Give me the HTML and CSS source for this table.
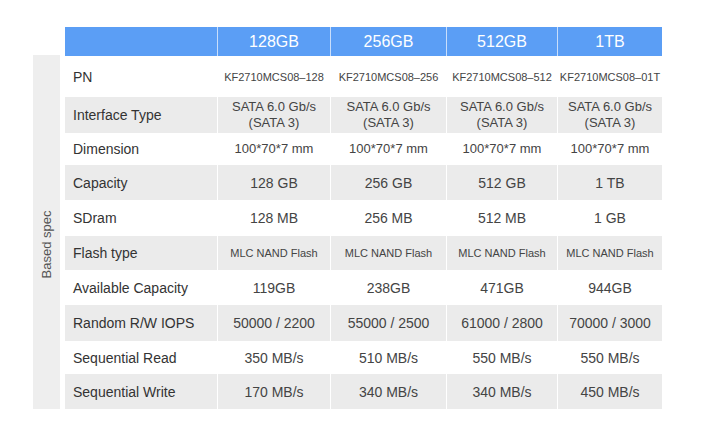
FILE: index.html
```html
<!DOCTYPE html>
<html>
<head>
<meta charset="utf-8">
<link rel="stylesheet" href="styles.css">
</head>
<body>
<div class="page">
  <div class="side"><span class="side-text">Based spec</span></div>
  <div class="spec">
    <div class="row head">
      <div class="cell"></div>
      <div class="cell">128GB</div>
      <div class="cell">256GB</div>
      <div class="cell">512GB</div>
      <div class="cell">1TB</div>
    </div>
    <div class="row r-pn">
      <div class="cell label">PN</div>
      <div class="cell small">KF2710MCS08–128</div>
      <div class="cell small">KF2710MCS08–256</div>
      <div class="cell small">KF2710MCS08–512</div>
      <div class="cell small">KF2710MCS08–01T</div>
    </div>
    <div class="row grey r-if">
      <div class="cell label">Interface Type</div>
      <div class="cell mid">SATA 6.0 Gb/s<br>(SATA 3)</div>
      <div class="cell mid">SATA 6.0 Gb/s<br>(SATA 3)</div>
      <div class="cell mid">SATA 6.0 Gb/s<br>(SATA 3)</div>
      <div class="cell mid">SATA 6.0 Gb/s<br>(SATA 3)</div>
    </div>
    <div class="row r-dim">
      <div class="cell label">Dimension</div>
      <div class="cell mid">100*70*7 mm</div>
      <div class="cell mid">100*70*7 mm</div>
      <div class="cell mid">100*70*7 mm</div>
      <div class="cell mid">100*70*7 mm</div>
    </div>
    <div class="row grey r-cap">
      <div class="cell label">Capacity</div>
      <div class="cell">128 GB</div>
      <div class="cell">256 GB</div>
      <div class="cell">512 GB</div>
      <div class="cell">1 TB</div>
    </div>
    <div class="row r-sd">
      <div class="cell label">SDram</div>
      <div class="cell">128 MB</div>
      <div class="cell">256 MB</div>
      <div class="cell">512 MB</div>
      <div class="cell">1 GB</div>
    </div>
    <div class="row grey r-fl">
      <div class="cell label">Flash type</div>
      <div class="cell small">MLC NAND Flash</div>
      <div class="cell small">MLC NAND Flash</div>
      <div class="cell small">MLC NAND Flash</div>
      <div class="cell small">MLC NAND Flash</div>
    </div>
    <div class="row r-av">
      <div class="cell label">Available Capacity</div>
      <div class="cell">119GB</div>
      <div class="cell">238GB</div>
      <div class="cell">471GB</div>
      <div class="cell">944GB</div>
    </div>
    <div class="row grey r-rw">
      <div class="cell label">Random R/W IOPS</div>
      <div class="cell">50000 / 2200</div>
      <div class="cell">55000 / 2500</div>
      <div class="cell">61000 / 2800</div>
      <div class="cell">70000 / 3000</div>
    </div>
    <div class="row r-sr">
      <div class="cell label">Sequential Read</div>
      <div class="cell">350 MB/s</div>
      <div class="cell">510 MB/s</div>
      <div class="cell">550 MB/s</div>
      <div class="cell">550 MB/s</div>
    </div>
    <div class="row grey r-sw">
      <div class="cell label">Sequential Write</div>
      <div class="cell">170 MB/s</div>
      <div class="cell">340 MB/s</div>
      <div class="cell">340 MB/s</div>
      <div class="cell">450 MB/s</div>
    </div>
  </div>
</div>
</body>
</html>
```
FILE: styles.css
```css
html, body {
  margin: 0;
  padding: 0;
  background: #ffffff;
}
body {
  font-family: "Liberation Sans", Arial, sans-serif;
  color: #444;
}
.page {
  display: flex;
  align-items: flex-start;
  padding: 27px 0 0 33px;
}
.side {
  width: 27px;
  height: 354px;
  margin-top: 28px;
  background: #eeeeee;
  display: flex;
  align-items: center;
  justify-content: center;
  padding-top: 24px;
  box-sizing: border-box;
}
.side-text {
  transform: rotate(-90deg);
  white-space: nowrap;
  font-size: 13px;
  color: #555;
}
.spec {
  margin-left: 5px;
  width: 597px;
  display: flex;
  flex-direction: column;
}
.row {
  display: grid;
  grid-template-columns: 152px 112px 115px 110px 104px;
  column-gap: 1px;
  background: #ffffff;
}
.cell {
  display: flex;
  align-items: center;
  justify-content: center;
  text-align: center;
  font-size: 14px;
  color: #444;
  line-height: 16px;
}
.grey .cell {
  background: #ebebeb;
}
.head {
  background: #c9defb;
  height: 29px;
}
.head .cell {
  background: #5b9ef5;
  color: #ffffff;
  font-size: 16px;
}
.label {
  justify-content: flex-start;
  padding-left: 8px;
  color: #333;
  font-size: 14px;
}
.small {
  font-size: 11px;
}
.mid {
  font-size: 13px;
}
.r-pn { height: 41px; }
.r-if { height: 36px; }
.r-dim { height: 32px; }
.r-cap { height: 35px; }
.r-sd { height: 36px; }
.r-fl { height: 34px; }
.r-av { height: 35px; }
.r-rw { height: 36px; }
.r-sr { height: 33px; }
.r-sw { height: 35px; }
```
